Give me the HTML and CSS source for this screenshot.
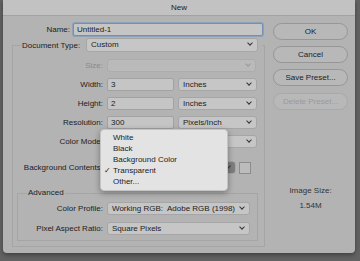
FILE: index.html
```html
<!DOCTYPE html>
<html lang="en">
<head>
    <meta charset="UTF-8">
    <meta name="viewport" content="width=device-width, initial-scale=1.0">
    <title>New</title>
    <link rel="stylesheet" href="styles.css">
</head>
<body>
    <div class="dialog">
        <div class="titlebar">New</div>
        <div class="main">
            <div class="left">
                <div class="name-row">
                    <span class="name-label">Name:</span>
                    <div class="field name-field">Untitled-1</div>
                </div>
                <fieldset class="group">
                    <legend class="group-head">
                        <span class="head-label">Document Type:</span>
                        <div class="select doc-type">Custom</div>
                    </legend>
                    <div class="row">
                        <span class="label disabled">Size:</span>
                        <div class="select size-select off"></div>
                    </div>
                    <div class="row">
                        <span class="label">Width:</span>
                        <div class="field num">3</div>
                        <div class="select unit">Inches</div>
                    </div>
                    <div class="row">
                        <span class="label">Height:</span>
                        <div class="field num">2</div>
                        <div class="select unit">Inches</div>
                    </div>
                    <div class="row">
                        <span class="label">Resolution:</span>
                        <div class="field num">300</div>
                        <div class="select unit">Pixels/Inch</div>
                    </div>
                    <!-- mode values sit under the open menu -->
                    <div class="row">
                        <span class="label">Color Mode:</span>
                        <div class="select mode"></div>
                        <div class="select unit"></div>
                    </div>
                    <div class="row bg-row">
                        <span class="label">Background Contents:</span>
                        <div class="select bg-select"><span class="bg-arrow"></span></div>
                        <div class="swatch"></div>
                    </div>
                    <fieldset class="advanced">
                        <legend class="adv-head">Advanced</legend>
                        <div class="row adv-row">
                            <span class="label adv-label">Color Profile:</span>
                            <div class="select profile">Working RGB:&nbsp; Adobe RGB (1998)</div>
                        </div>
                        <div class="row adv-row second">
                            <span class="label adv-label">Pixel Aspect Ratio:</span>
                            <div class="select profile">Square Pixels</div>
                        </div>
                    </fieldset>
                </fieldset>
            </div>
            <div class="right">
                <button class="btn">OK</button>
                <button class="btn">Cancel</button>
                <button class="btn">Save Preset...</button>
                <button class="btn off">Delete Preset...</button>
                <div class="image-size">
                    <div>Image Size:</div>
                    <div class="size-value">1.54M</div>
                </div>
            </div>
        </div>
        <ul class="menu">
            <li>White</li>
            <li>Black</li>
            <li>Background Color</li>
            <li class="checked">Transparent</li>
            <li>Other...</li>
        </ul>
    </div>
</body>
</html>
```

FILE: styles.css
```css
body {
    margin: 0;
    width: 360px;
    height: 261px;
    background-color: #626262;
    font-family: "Liberation Sans", Arial, sans-serif;
    font-size: 8px;
    color: #1c1c1c;
    overflow: hidden;
}

.dialog {
    position: relative;
    margin-left: 3px;
    width: 352px;
    height: 253px;
    background-color: #b3b3b3;
    border-radius: 0 0 4px 4px;
    box-shadow: 0 2px 4px rgba(0, 0, 0, 0.35);
}

.titlebar {
    height: 15px;
    line-height: 15px;
    text-align: center;
    background-color: #c2c2c2;
    border-bottom: 1px solid #a2a2a2;
}

.main {
    display: flex;
    padding-left: 9px;
}

.left {
    width: 253px;
}

.name-row {
    display: flex;
    align-items: center;
    margin-top: 7px;
    height: 13px;
}

.name-label {
    width: 58px;
    text-align: right;
    margin-right: 3px;
}

.field {
    box-sizing: border-box;
    height: 13px;
    line-height: 11px;
    padding-left: 3px;
    background-color: #c5c5c5;
    border: 1px solid #a2a2a2;
    border-radius: 2px;
}

.name-field {
    width: 190px;
    border-color: #7590b5;
    box-shadow: 0 0 0 1px rgba(110, 145, 190, 0.55);
}

.select {
    position: relative;
    box-sizing: border-box;
    height: 13px;
    line-height: 11px;
    padding-left: 4px;
    background-color: #c6c6c6;
    border: 1px solid #a6a6a6;
    border-radius: 3px;
}

.select::after {
    content: "";
    position: absolute;
    right: 5px;
    top: 2px;
    width: 3px;
    height: 3px;
    border-right: 1px solid #333;
    border-bottom: 1px solid #333;
    transform: rotate(45deg);
}

.select.off {
    background-color: #bababa;
    border-color: #acacac;
}

.select.off::after {
    border-color: #999;
}

.group {
    margin: 2px 0 0;
    padding: 0 0 5px;
    border: 1px solid #a5a5a5;
    width: 253px;
    box-sizing: border-box;
}

.group-head {
    display: flex;
    align-items: center;
    margin-left: 9px;
    padding: 0 4px 0 0;
    height: 14px;
}

.head-label {
    width: 64px;
}

.doc-type {
    width: 172px;
    height: 14px;
    line-height: 12px;
}

.row {
    display: flex;
    align-items: center;
    height: 13px;
    margin-top: 6px;
}

.group-head + .row {
    margin-top: 7px;
}

.label {
    width: 90px;
    margin-right: 4px;
    text-align: right;
    white-space: nowrap;
}

.disabled {
    color: #8a8a8a;
}

.size-select {
    width: 149px;
}

.num {
    width: 67px;
    margin-right: 4px;
}

.unit {
    width: 79px;
}

.mode {
    width: 67px;
    margin-right: 4px;
}

.bg-row {
    margin-top: 13px;
}

.bg-select {
    width: 129px;
    margin-right: 3px;
    overflow: hidden;
}

.bg-arrow {
    position: absolute;
    right: 0;
    top: 0;
    width: 8px;
    height: 100%;
    background-color: #7e7e7e;
}

.swatch {
    box-sizing: border-box;
    width: 12px;
    height: 12px;
    background-color: #bcbcbc;
    border: 1px solid #8c8c8c;
}

.advanced {
    margin: 14px 0 0 4px;
    padding: 0 0 5px;
    width: 241px;
    box-sizing: border-box;
    border: 1px solid #a5a5a5;
}

.adv-head {
    margin-left: 9px;
    padding: 0 1px;
    line-height: 10px;
}

.adv-row {
    margin-top: 4px;
}

.adv-row.second {
    margin-top: 7px;
}

.adv-label {
    width: 85px;
}

.profile {
    width: 143px;
}

.right {
    display: flex;
    flex-direction: column;
    margin-left: 8px;
    width: 75px;
}

.btn {
    box-sizing: border-box;
    height: 17px;
    margin-top: 6px;
    padding: 0;
    font-family: inherit;
    font-size: 8px;
    color: #1c1c1c;
    background-color: #b8b8b8;
    border: 1px solid #969696;
    border-radius: 9px;
}

.btn:first-child {
    margin-top: 7px;
}

.btn.off {
    color: #9a9a9a;
    border-color: #a9a9a9;
    margin-top: 7px;
}

.image-size {
    margin-top: 76px;
    text-align: center;
    color: #333;
    line-height: 10px;
}

.size-value {
    margin-top: 5px;
}

.menu {
    position: absolute;
    left: 97px;
    top: 129px;
    width: 128px;
    margin: 0;
    padding: 2px 0 3px;
    list-style: none;
    background-color: #e3e3e3;
    border: 1px solid #c4c4c4;
    border-radius: 4px;
    box-shadow: 0 2px 6px rgba(0, 0, 0, 0.35);
    box-sizing: border-box;
}

.menu li {
    position: relative;
    height: 11px;
    line-height: 11px;
    padding-left: 12px;
}

.menu li.checked::before {
    content: "\2713";
    position: absolute;
    left: 3px;
    font-family: "DejaVu Sans", sans-serif;
    font-size: 8px;
}
```
